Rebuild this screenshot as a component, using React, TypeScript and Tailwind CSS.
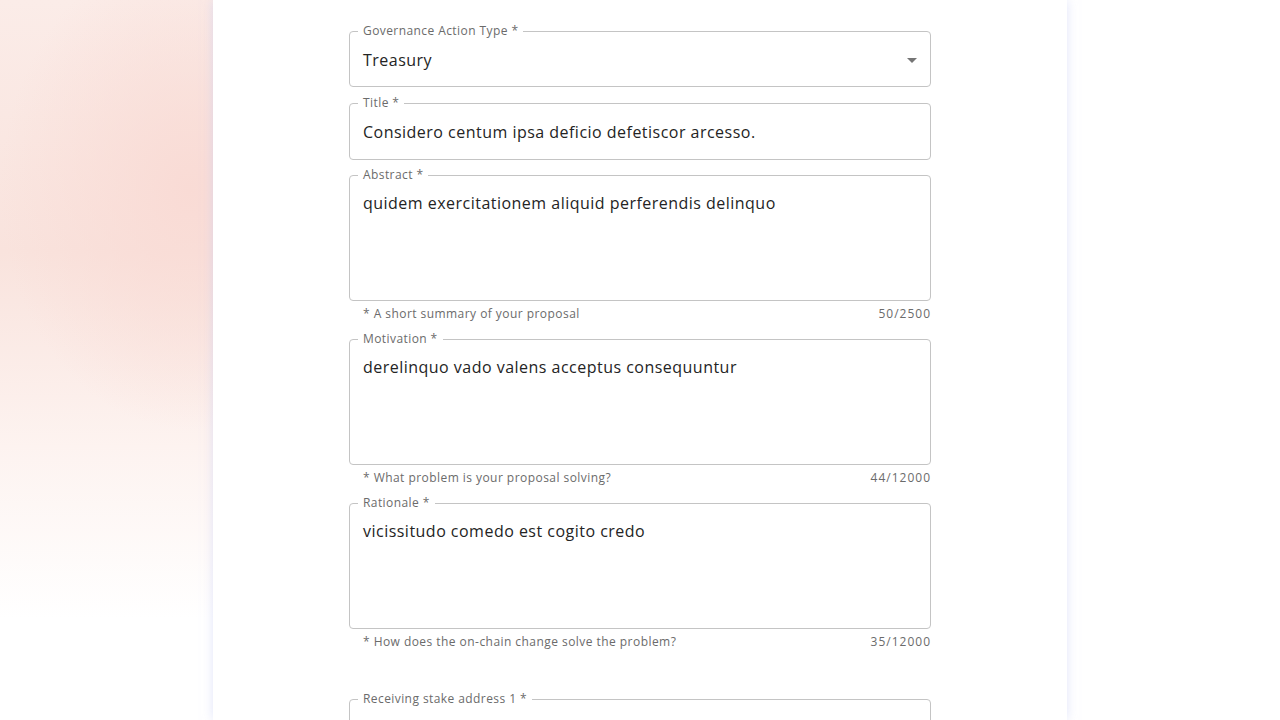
import React from "react";

const FONT = "font-['Open_Sans',sans-serif]";

function Legend({ label }: { label: string }) {
  return (
    <legend className="ml-[8px] px-[5px] text-[12px] leading-[16px] tracking-[0.42px] text-[#6b6b6b]">
      {label}
    </legend>
  );
}

function SelectField({ label, value }: { label: string; value: string }) {
  return (
    <fieldset className="mb-[1px] rounded-[4px] border border-[#c4c4c4]">
      <Legend label={label} />
      <div className="flex h-[47px] items-start justify-between pl-[13px] pr-[6px] pt-[9px]">
        <span className="text-[16px] leading-[24px] tracking-[0.48px] text-[#242424]">{value}</span>
        <svg viewBox="0 0 24 24" className="h-6 w-6 fill-[#757575]">
          <path d="M7 10l5 5 5-5z" />
        </svg>
      </div>
    </fieldset>
  );
}

function TextField({ label, value }: { label: string; value: string }) {
  return (
    <fieldset className="rounded-[4px] border border-[#c4c4c4]">
      <Legend label={label} />
      <div className="h-[48px] px-[13px] pt-[9px] text-[16px] leading-[24px] tracking-[0.48px] text-[#242424]">
        {value}
      </div>
    </fieldset>
  );
}

function AreaField({
  label,
  value,
  helper,
  count,
}: {
  label: string;
  value: string;
  helper: string;
  count: string;
}) {
  return (
    <div className="flex flex-col">
      <fieldset className="rounded-[4px] border border-[#c4c4c4]">
        <Legend label={label} />
        <div className="h-[117px] px-[13px] pt-[8px] text-[16px] leading-[24px] tracking-[0.48px] text-[#242424]">
          {value}
        </div>
      </fieldset>
      <div className="mt-[3px] flex justify-between pl-[14px] text-[12px] leading-[20px] tracking-[0.45px] text-[#6b6b6b]">
        <span>{helper}</span>
        <span className="tracking-[1px]">{count}</span>
      </div>
    </div>
  );
}

export default function App() {
  return (
    <div
      className={`${FONT} flex h-[720px] w-full justify-center overflow-hidden bg-[linear-gradient(to_right,rgba(255,255,255,0)_0px,rgba(255,255,255,0)_640px,#ffffff_640px),radial-gradient(ellipse_190px_240px_at_190px_190px,#f9dbd5_0%,rgba(249,219,213,0)_100%),linear-gradient(to_bottom,#fbece8_0%,#f9e3dd_35%,#fdf3f0_62%,#ffffff_86%)]`}
    >
      <div className="w-[854px] bg-white shadow-[0_0_10px_rgba(200,205,245,0.55)]">
        <div className="mx-auto flex w-[582px] flex-col gap-[7px] pt-[23px]">
          <SelectField label="Governance Action Type *" value="Treasury" />
          <TextField
            label="Title *"
            value="Considero centum ipsa deficio defetiscor arcesso."
          />
          <AreaField
            label="Abstract *"
            value="quidem exercitationem aliquid perferendis delinquo"
            helper="* A short summary of your proposal"
            count="50/2500"
          />
          <AreaField
            label="Motivation *"
            value="derelinquo vado valens acceptus consequuntur"
            helper="* What problem is your proposal solving?"
            count="44/12000"
          />
          <AreaField
            label="Rationale *"
            value="vicissitudo comedo est cogito credo"
            helper="* How does the on-chain change solve the problem?"
            count="35/12000"
          />
          <div className="mt-[32px]">
            <TextField label="Receiving stake address 1 *" value="" />
          </div>
        </div>
      </div>
    </div>
  );
}
